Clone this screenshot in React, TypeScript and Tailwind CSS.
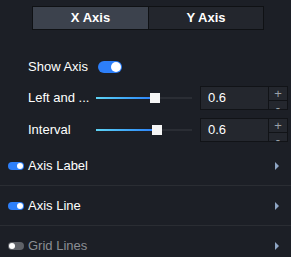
import { useState } from "react";

function Toggle({ on, small }: { on: boolean; small?: boolean }) {
  if (small) {
    return (
      <div
        className={`w-[16px] h-[8px] rounded-full flex items-center px-[1px] ${
          on ? "bg-[#2d7ff9] justify-end" : "bg-[#5f6268] justify-start"
        }`}
      >
        <div className="w-[6px] h-[6px] rounded-full bg-white" />
      </div>
    );
  }
  return (
    <div
      className={`w-[24px] h-[12px] rounded-full flex items-center px-[1px] ${
        on ? "bg-[#2d7ff9] justify-end" : "bg-[#5f6268] justify-start"
      }`}
    >
      <div className="w-[10px] h-[10px] rounded-full bg-white" />
    </div>
  );
}

function SliderRow({ label, value, pct }: { label: string; value: string; pct: number }) {
  return (
    <div className="flex items-center h-[24px] pl-[28px]">
      <div className="w-[64px] whitespace-nowrap text-[13px] text-white">{label}</div>
      <div className="ml-[4px] w-[96px] h-[2px] bg-[#2a2d34] relative">
        <div
          className="h-full bg-gradient-to-r from-[#5fd3f3] to-[#2d7ff9]"
          style={{ width: `${pct}%` }}
        />
        <div
          className="absolute top-[-4px] w-[10px] h-[10px] bg-[#f5f5f5]"
          style={{ left: `calc(${pct}% - 4px)` }}
        />
      </div>
      <div className="ml-[8px] flex h-[24px] border border-[#111317]">
        <div className="w-[67px] bg-[#24272e] flex items-center pl-[7px] text-[13px] text-white">
          {value}
        </div>
        <div className="w-[19px] flex flex-col border-l border-[#111317] bg-[#24272e]">
          <div className="flex-1 flex items-center justify-center text-[13px] leading-none text-[#9aa0a8] border-b border-[#111317]">
            +
          </div>
          <div className="flex-1 flex items-center justify-center text-[13px] leading-none text-[#9aa0a8]">
            -
          </div>
        </div>
      </div>
    </div>
  );
}

function Section({ label, on }: { label: string; on: boolean }) {
  return (
    <div className="flex items-center h-[40px] pl-[8px] pr-[12px] border-b border-[#2a2d33]">
      <Toggle on={on} small />
      <span className={`ml-[4px] text-[13px] ${on ? "text-white" : "text-[#8b8e94]"}`}>{label}</span>
      <svg className="ml-auto" width="4" height="8" viewBox="0 0 4 8">
        <path d="M0 0 L4 4 L0 8 Z" fill="#8fa6c4" />
      </svg>
    </div>
  );
}

export default function App() {
  const [tab, setTab] = useState("x");

  return (
    <div
      className="w-[291px] h-[257px] overflow-hidden bg-[#1c1f26]"
      style={{ fontFamily: '"Liberation Sans", Arial, sans-serif' }}
    >
      {/* Tabs */}
      <div className="pt-[6px] pl-[32px]">
        <div className="flex w-[232px] h-[24px] border border-[#0f1114]">
          <button
            onClick={() => setTab("x")}
            className={`w-[115px] text-[13px] font-bold text-white ${
              tab === "x" ? "bg-[#3c424d]" : "bg-[#23262d]"
            }`}
          >
            X Axis
          </button>
          <button
            onClick={() => setTab("y")}
            className={`flex-1 border-l border-[#0f1114] text-[13px] font-bold text-white ${
              tab === "y" ? "bg-[#3c424d]" : "bg-[#23262d]"
            }`}
          >
            Y Axis
          </button>
        </div>
      </div>

      {/* Show Axis */}
      <div className="flex items-center h-[20px] mt-[27px] pl-[28px]">
        <span className="text-[13px] text-white">Show Axis</span>
        <div className="ml-[10px]">
          <Toggle on />
        </div>
      </div>

      <div className="mt-[9px]">
        <SliderRow label="Left and ..." value="0.6" pct={60} />
      </div>
      <div className="mt-[8px]">
        <SliderRow label="Interval" value="0.6" pct={63} />
      </div>

      <div className="mt-[4px]">
        <Section label="Axis Label" on />
        <Section label="Axis Line" on />
        <Section label="Grid Lines" on={false} />
      </div>
    </div>
  );
}
